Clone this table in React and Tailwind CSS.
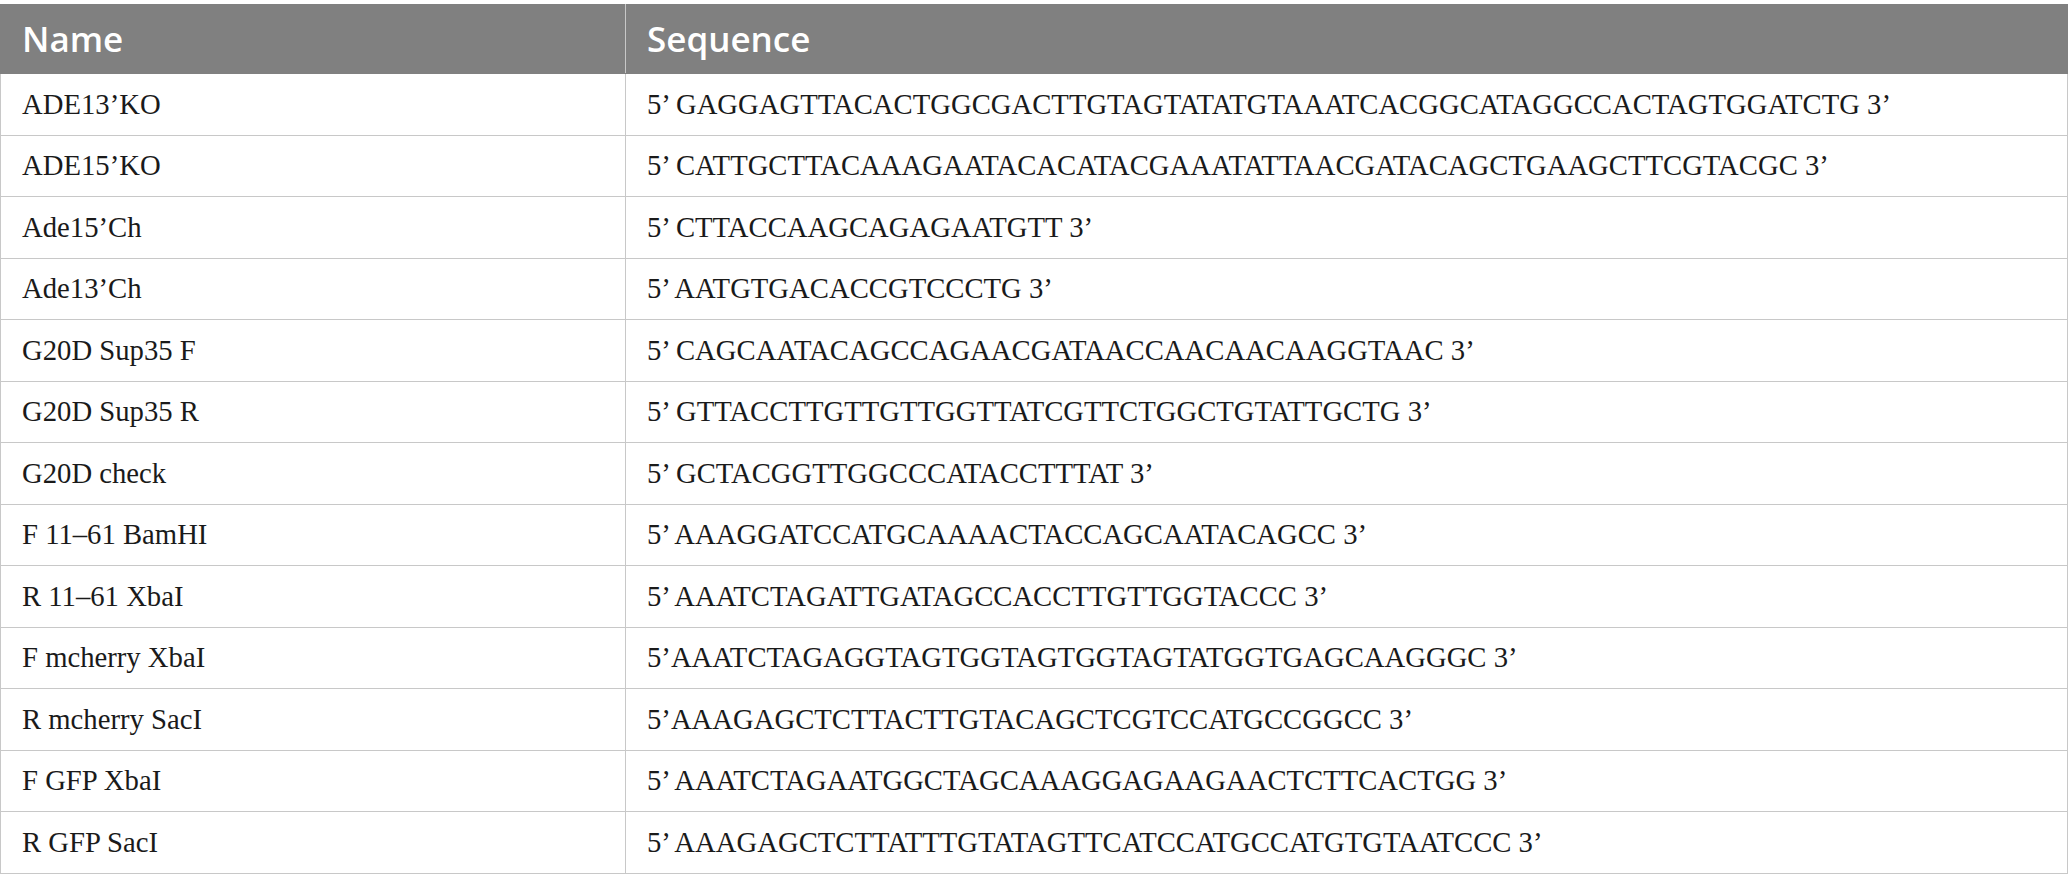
const rows = [
  ["ADE13’KO", "5’ GAGGAGTTACACTGGCGACTTGTAGTATATGTAAATCACGGCATAGGCCACTAGTGGATCTG 3’"],
  ["ADE15’KO", "5’ CATTGCTTACAAAGAATACACATACGAAATATTAACGATACAGCTGAAGCTTCGTACGC 3’"],
  ["Ade15’Ch", "5’ CTTACCAAGCAGAGAATGTT 3’"],
  ["Ade13’Ch", "5’ AATGTGACACCGTCCCTG 3’"],
  ["G20D Sup35 F", "5’ CAGCAATACAGCCAGAACGATAACCAACAACAAGGTAAC 3’"],
  ["G20D Sup35 R", "5’ GTTACCTTGTTGTTGGTTATCGTTCTGGCTGTATTGCTG 3’"],
  ["G20D check", "5’ GCTACGGTTGGCCCATACCTTTAT 3’"],
  ["F 11–61 BamHI", "5’ AAAGGATCCATGCAAAACTACCAGCAATACAGCC 3’"],
  ["R 11–61 XbaI", "5’ AAATCTAGATTGATAGCCACCTTGTTGGTACCC 3’"],
  ["F mcherry XbaI", "5’AAATCTAGAGGTAGTGGTAGTGGTAGTATGGTGAGCAAGGGC 3’"],
  ["R mcherry SacI", "5’AAAGAGCTCTTACTTGTACAGCTCGTCCATGCCGGCC 3’"],
  ["F GFP XbaI", "5’ AAATCTAGAATGGCTAGCAAAGGAGAAGAACTCTTCACTGG 3’"],
  ["R GFP SacI", "5’ AAAGAGCTCTTATTTGTATAGTTCATCCATGCCATGTGTAATCCC 3’"],
];

const App = () => {
  return (
    <div className="w-[2068px] h-[889px] bg-white pt-[4px]">
      <table className="w-full border-collapse">
        <thead>
          <tr className="h-[69px] bg-[#808080] text-white font-['Open_Sans',sans-serif] text-[35px]">
            <th className="w-[625px] text-left font-semibold pl-[21px] border border-[#808080] border-r-[#c8c8c8]">Name</th>
            <th className="text-left font-semibold pl-[21px] border border-[#808080]">Sequence</th>
          </tr>
        </thead>
        <tbody className="font-['Liberation_Serif',serif] text-[28.7px] text-[#1a1a1a]">
          {rows.map(([name, seq]) => (
            <tr key={name} className="h-[61.5px]">
              <td className="pl-[21px] border border-[#c8c8c8]">{name}</td>
              <td className="pl-[21px] border border-[#c8c8c8]">{seq}</td>
            </tr>
          ))}
        </tbody>
      </table>
    </div>
  );
};

export default App;
